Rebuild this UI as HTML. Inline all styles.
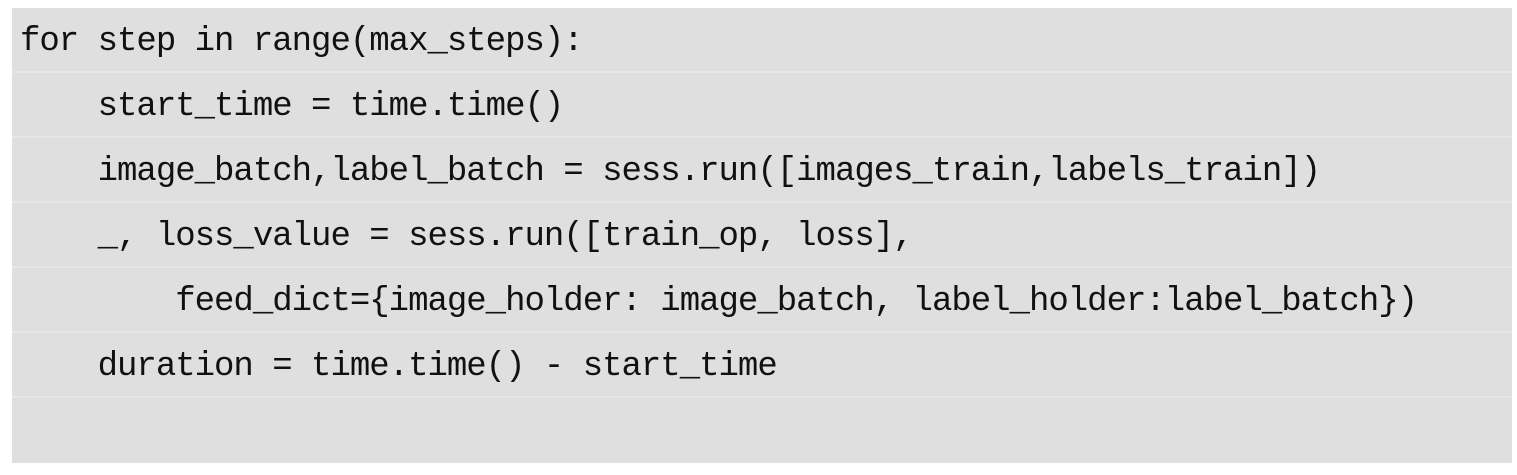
<!DOCTYPE html>
<html><head><style>
html,body{margin:0;padding:0;background:#fff;width:1517px;height:475px;overflow:hidden}
.box{position:absolute;left:12px;top:8px;width:1500px;height:455px;background:#dfdfdf}
.row{position:absolute;left:0;width:1500px;height:65px;border-bottom:2px solid #e6e6e6;box-sizing:border-box}
.t{position:absolute;left:8px;top:3px;height:63px;line-height:63px;font-family:"Liberation Mono",monospace;font-size:34px;letter-spacing:-1px;color:#111;white-space:pre}
</style></head><body>
<div class="box">
<div class="row" style="top:0"><div class="t">for step in range(max_steps):</div></div>
<div class="row" style="top:65px"><div class="t">    start_time = time.time()</div></div>
<div class="row" style="top:130px"><div class="t">    image_batch,label_batch = sess.run([images_train,labels_train])</div></div>
<div class="row" style="top:195px"><div class="t">    _, loss_value = sess.run([train_op, loss],</div></div>
<div class="row" style="top:260px"><div class="t">        feed_dict={image_holder: image_batch, label_holder:label_batch})</div></div>
<div class="row" style="top:325px"><div class="t">    duration = time.time() - start_time</div></div>
<div class="row" style="top:390px;border-bottom:none"><div class="t"></div></div>
</div>
</body></html>
